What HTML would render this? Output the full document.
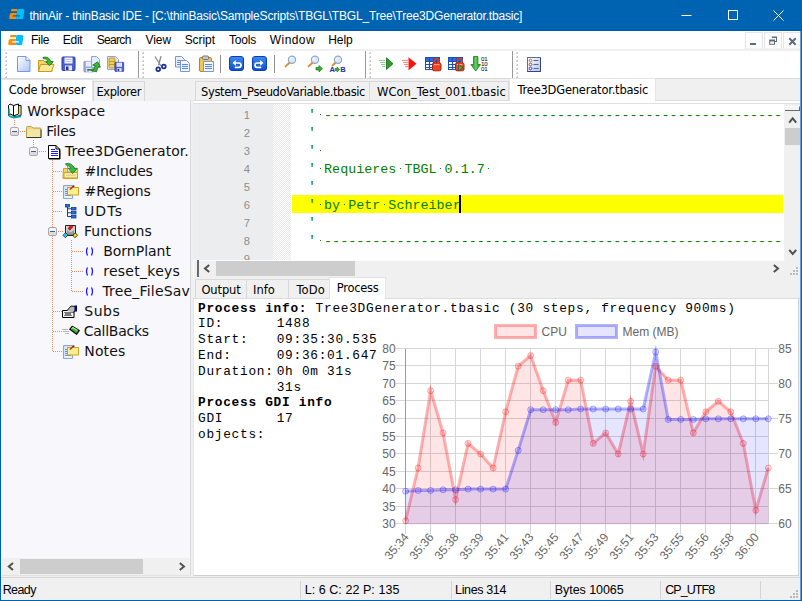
<!DOCTYPE html>
<html><head><meta charset="utf-8"><title>thinAir - thinBasic IDE</title>
<style>
*{box-sizing:border-box;margin:0;padding:0}
html,body{width:802px;height:601px;overflow:hidden;background:#f0f0f0}
body{position:relative;font-family:"Liberation Sans",sans-serif;font-size:12px;color:#000}
.abs{position:absolute}
#win{position:absolute;left:0;top:0;width:802px;height:601px;background:#f0f0f0;overflow:hidden}
#title{left:0;top:0;width:802px;height:31px;background:#0063b1;color:#fff}
#title span{position:absolute;top:9px;font-size:12px;white-space:nowrap;line-height:14px}
#menu{left:1px;top:31px;width:800px;height:19px;background:#fff}
#menu span{position:absolute;top:2px;line-height:15px;font-size:12px;white-space:nowrap}
#tool{left:1px;top:49px;width:800px;height:30px;background:#fff;border-top:2px solid #f0f0f0;border-bottom:1px solid #d9d9d9}
.tab{position:absolute;font-family:"DejaVu Sans","Liberation Sans",sans-serif;font-size:11.5px;white-space:nowrap;background:#f0f0f0;border:1px solid #d9d9d9;border-bottom:none;color:#000}
.tab.on{background:#fff;border-color:#e4e4e4}
.tab span{position:absolute;white-space:nowrap}
#tree{left:2px;top:101px;width:188px;height:457px;background:#f8f7fc;overflow:hidden;font-family:"DejaVu Sans","Liberation Sans",sans-serif;font-size:14px}
#tree .r{position:absolute;white-space:nowrap;line-height:20px;height:20px;color:#111}
#status{left:1px;top:577px;width:800px;height:23px;background:#f0f0f0;border-top:1px solid #d7d7d7}
#status span{position:absolute;top:5px;font-size:12.5px;line-height:14px;white-space:nowrap}
#status i{position:absolute;top:3px;width:1px;height:18px;background:#d4d4d4}
#code{font-family:"Liberation Mono","DejaVu Sans Mono",monospace;font-size:13.4px;color:#008000}
#code .l{position:absolute;left:0;height:18px;line-height:18px;white-space:pre}
#code .q{position:relative;top:-1px}
.wd{position:absolute;width:1px;height:1px;background:#0a7a0a}
#ln{font-family:"Liberation Sans",sans-serif;font-size:11.2px;color:#8e8e8e}
#proc{font-family:"Liberation Mono","DejaVu Sans Mono",monospace;font-size:12.8px;letter-spacing:0.72px;color:#000}
#proc span{position:absolute;white-space:pre;line-height:16px}
#proc b{font-weight:bold}
</style></head><body>
<div id="win">
<div id="title" class="abs"><span style="left:29.4px;letter-spacing:-0.186px;">thinAir - thinBasic IDE - [C:\thinBasic\SampleScripts\TBGL\TBGL_Tree\Tree3DGenerator.tbasic]</span>
<svg class="abs" style="left:9.4px;top:9.3px" width="17" height="11" viewBox="0 0 17 11"><g transform="translate(1.4,0) skewX(-7.5)"><path d="M1.3 0H7V2.2H.9Q.9 0 1.300 0zM1.500 3.900H7V6.200H3.300V7.600H7V9.900H1.200Q0 9.900 0 8.700V5.400Q0 3.900 1.500 3.900z" fill="#ff8c00"/><path d="M7 0h5.600q1.500 0 1.500 1.500V9.900H7V7.600h3.400V6.200H7z" fill="#00bfff"/></g></svg>
<svg class="abs" style="left:660px;top:0" width="142" height="31" viewBox="0 0 142 31"><g stroke="#fff" stroke-width="1" fill="none"><path d="M21.5 15.5h10"/><rect x="68.500" y="10.500" width="9" height="9"/><path d="M113.500 10.500l10 10M123.500 10.500l-10 10"/></g></svg>
<div class="abs" style="left:0;top:30px;width:802px;height:1px;background:#0058a8"></div>
</div>
<div id="menu" class="abs">
<svg class="abs" style="left:7.2px;top:3.6px" width="17" height="11" viewBox="0 0 17 11"><g transform="translate(1.4,0) skewX(-7.5)"><path d="M1.3 0H7V2.2H.9Q.9 0 1.300 0zM1.500 3.900H7V6.200H3.300V7.600H7V9.900H1.200Q0 9.900 0 8.700V5.400Q0 3.900 1.500 3.900z" fill="#ff8c00"/><path d="M7 0h5.600q1.500 0 1.500 1.500V9.900H7V7.600h3.400V6.200H7z" fill="#00bfff"/></g></svg>
<span style="left:30.1px;letter-spacing:-0.348px;">File</span>
<span style="left:61.7px;letter-spacing:-0.229px;">Edit</span>
<span style="left:95.7px;letter-spacing:-0.666px;">Search</span>
<span style="left:144.4px;letter-spacing:0.001px;">View</span>
<span style="left:183.7px;letter-spacing:-0.078px;">Script</span>
<span style="left:228.1px;letter-spacing:-0.229px;">Tools</span>
<span style="left:268.8px;letter-spacing:0.423px;">Window</span>
<span style="left:327.3px;letter-spacing:-0.096px;">Help</span>
<svg class="abs" style="left:743px;top:1px" width="57" height="18" viewBox="743 32 57 18"><g fill="#fdfdfd" stroke="#e6e6e6"><rect x="744.500" y="32.500" width="17" height="16.500"/><rect x="763.500" y="32.500" width="17" height="16.500"/><rect x="782.500" y="32.500" width="17" height="16.500"/></g><g fill="#5d6b7c"><rect x="749" y="43" width="6" height="2"/><path d="M770.300 36.500h5.700v5.500h-2v-1h1v-3h-3.700v0z"/><path d="M768.200 39.500h5.800v5.200h-5.800zM769.200 41.500v2.200h3.800v-2.200z" fill-rule="evenodd"/></g><path d="M788.300 38.300l6.400 6.400M794.700 38.300l-6.400 6.400" stroke="#5d6b7c" stroke-width="2" fill="none"/></svg>
</div>
<div id="tool" class="abs"></div>
<svg class="abs" style="left:0;top:0" width="802" height="80" viewBox="0 0 802 80">
<rect x="5" y="52" width="2" height="2" fill="#c9c9c9"/><rect x="5" y="52" width="1" height="1" fill="#f4f4f4"/><rect x="5" y="56" width="2" height="2" fill="#c9c9c9"/><rect x="5" y="56" width="1" height="1" fill="#f4f4f4"/><rect x="5" y="60" width="2" height="2" fill="#c9c9c9"/><rect x="5" y="60" width="1" height="1" fill="#f4f4f4"/><rect x="5" y="64" width="2" height="2" fill="#c9c9c9"/><rect x="5" y="64" width="1" height="1" fill="#f4f4f4"/><rect x="5" y="68" width="2" height="2" fill="#c9c9c9"/><rect x="5" y="68" width="1" height="1" fill="#f4f4f4"/><rect x="5" y="72" width="2" height="2" fill="#c9c9c9"/><rect x="5" y="72" width="1" height="1" fill="#f4f4f4"/><rect x="5" y="76" width="2" height="2" fill="#c9c9c9"/><rect x="5" y="76" width="1" height="1" fill="#f4f4f4"/>
<rect x="138" y="51" width="1" height="27" fill="#9a9a9a"/><rect x="139" y="51" width="1" height="27" fill="#fff"/>
<rect x="142" y="52" width="2" height="2" fill="#c9c9c9"/><rect x="142" y="52" width="1" height="1" fill="#f4f4f4"/><rect x="142" y="56" width="2" height="2" fill="#c9c9c9"/><rect x="142" y="56" width="1" height="1" fill="#f4f4f4"/><rect x="142" y="60" width="2" height="2" fill="#c9c9c9"/><rect x="142" y="60" width="1" height="1" fill="#f4f4f4"/><rect x="142" y="64" width="2" height="2" fill="#c9c9c9"/><rect x="142" y="64" width="1" height="1" fill="#f4f4f4"/><rect x="142" y="68" width="2" height="2" fill="#c9c9c9"/><rect x="142" y="68" width="1" height="1" fill="#f4f4f4"/><rect x="142" y="72" width="2" height="2" fill="#c9c9c9"/><rect x="142" y="72" width="1" height="1" fill="#f4f4f4"/><rect x="142" y="76" width="2" height="2" fill="#c9c9c9"/><rect x="142" y="76" width="1" height="1" fill="#f4f4f4"/>
<rect x="365" y="51" width="1" height="27" fill="#9a9a9a"/><rect x="366" y="51" width="1" height="27" fill="#fff"/>
<rect x="369" y="52" width="2" height="2" fill="#c9c9c9"/><rect x="369" y="52" width="1" height="1" fill="#f4f4f4"/><rect x="369" y="56" width="2" height="2" fill="#c9c9c9"/><rect x="369" y="56" width="1" height="1" fill="#f4f4f4"/><rect x="369" y="60" width="2" height="2" fill="#c9c9c9"/><rect x="369" y="60" width="1" height="1" fill="#f4f4f4"/><rect x="369" y="64" width="2" height="2" fill="#c9c9c9"/><rect x="369" y="64" width="1" height="1" fill="#f4f4f4"/><rect x="369" y="68" width="2" height="2" fill="#c9c9c9"/><rect x="369" y="68" width="1" height="1" fill="#f4f4f4"/><rect x="369" y="72" width="2" height="2" fill="#c9c9c9"/><rect x="369" y="72" width="1" height="1" fill="#f4f4f4"/><rect x="369" y="76" width="2" height="2" fill="#c9c9c9"/><rect x="369" y="76" width="1" height="1" fill="#f4f4f4"/>
<rect x="512" y="51" width="1" height="27" fill="#9a9a9a"/><rect x="513" y="51" width="1" height="27" fill="#fff"/>
<rect x="516" y="52" width="2" height="2" fill="#c9c9c9"/><rect x="516" y="52" width="1" height="1" fill="#f4f4f4"/><rect x="516" y="56" width="2" height="2" fill="#c9c9c9"/><rect x="516" y="56" width="1" height="1" fill="#f4f4f4"/><rect x="516" y="60" width="2" height="2" fill="#c9c9c9"/><rect x="516" y="60" width="1" height="1" fill="#f4f4f4"/><rect x="516" y="64" width="2" height="2" fill="#c9c9c9"/><rect x="516" y="64" width="1" height="1" fill="#f4f4f4"/><rect x="516" y="68" width="2" height="2" fill="#c9c9c9"/><rect x="516" y="68" width="1" height="1" fill="#f4f4f4"/><rect x="516" y="72" width="2" height="2" fill="#c9c9c9"/><rect x="516" y="72" width="1" height="1" fill="#f4f4f4"/><rect x="516" y="76" width="2" height="2" fill="#c9c9c9"/><rect x="516" y="76" width="1" height="1" fill="#f4f4f4"/>
<defs><linearGradient id="gp" x1="0" y1="0" x2="1" y2="1"><stop offset="0" stop-color="#ffffff"/><stop offset="1" stop-color="#a9c6f5"/></linearGradient><linearGradient id="gb" x1="0" y1="0" x2="0" y2="1"><stop offset="0" stop-color="#3f8cf0"/><stop offset="1" stop-color="#0a4fd0"/></linearGradient><linearGradient id="gg" x1="0" y1="0" x2="1" y2="0"><stop offset="0" stop-color="#1f8a1f"/><stop offset=".5" stop-color="#5fd35f"/><stop offset="1" stop-color="#1f8a1f"/></linearGradient></defs>
<path d="M17.500 56.500h8.500l4 4v11h-12.500z" fill="url(#gp)" stroke="#7d97dc"/><path d="M26 56.500v4h4" fill="#e8f0ff" stroke="#7d97dc"/>
<path d="M38.500 60.500h5l1.500 1.500h7v9.500h-13.500z" fill="#f1d56a" stroke="#c79a1e"/><path d="M40.500 64.500h13.500l-2.500 7h-13z" fill="#fbe89a" stroke="#c79a1e"/><path d="M43 57.300q6-1.300 7.700 4.200h2.500l-3.700 4.300-3.800-4.300h2.300q-1-3-5-3z" fill="#3cb83c" stroke="#1b7a1b" stroke-width=".8"/>
<g transform="translate(61.5,56.5) scale(1)" opacity="1"><path d="M.5 1.500q0-1 1-1h11q1 0 1 1v11.500q0 1-1 1h-11q-1 0-1-1z" fill="#4a5ed0" stroke="#2c3aa0"/><rect x="3" y="1" width="8" height="6" fill="#f4f6ff"/><path d="M4 3h6M4 5h6" stroke="#b9c0e6" stroke-width="1"/><rect x="3.500" y="9" width="7" height="5" fill="#e8e8f4"/><rect x="4.500" y="10" width="2.500" height="3.500" fill="#27318f"/></g>
<g transform="translate(83.5,61) scale(0.78)" opacity="0.55"><path d="M.5 1.500q0-1 1-1h11q1 0 1 1v11.500q0 1-1 1h-11q-1 0-1-1z" fill="#4a5ed0" stroke="#2c3aa0"/><rect x="3" y="1" width="8" height="6" fill="#f4f6ff"/><path d="M4 3h6M4 5h6" stroke="#b9c0e6" stroke-width="1"/><rect x="3.500" y="9" width="7" height="5" fill="#e8e8f4"/><rect x="4.500" y="10" width="2.500" height="3.500" fill="#27318f"/></g>
<path d="M91.500 56.500h5l3 3v8h-8z" fill="#e3edfb" stroke="#8ea3dc"/>
<path d="M89 71l6-1.500v-4h-2.500l4-4.500 4 4.500h-2.500v5.500z" fill="#3cb83c" stroke="#1b7a1b" stroke-width=".8" transform="rotate(15 94 66)"/>
<path d="M107.500 56.500h8l3 3v10h-11z" fill="#dfe9fa" stroke="#8ea3dc"/><rect x="109" y="58" width="6" height="10" rx="1" fill="#f3cf55" stroke="#c79a1e"/><path d="M109 61.500h6M109 64.500h6" stroke="#c79a1e"/>
<g transform="translate(114.5,62) scale(0.68)" opacity="1"><path d="M.5 1.500q0-1 1-1h11q1 0 1 1v11.500q0 1-1 1h-11q-1 0-1-1z" fill="#4a5ed0" stroke="#2c3aa0"/><rect x="3" y="1" width="8" height="6" fill="#f4f6ff"/><path d="M4 3h6M4 5h6" stroke="#b9c0e6" stroke-width="1"/><rect x="3.500" y="9" width="7" height="5" fill="#e8e8f4"/><rect x="4.500" y="10" width="2.500" height="3.500" fill="#27318f"/></g>
<path d="M155 56.500l6 9.500M161 56.300l-2.500 9" stroke="#8c8c9c" stroke-width="1.400"/><circle cx="158.200" cy="69.200" r="1.900" fill="none" stroke="#1a2a9c" stroke-width="1.700"/><circle cx="163.800" cy="66.500" r="1.900" fill="none" stroke="#1a2a9c" stroke-width="1.700"/>
<path d="M175.500 56.500h6l3 3v7.500h-9z" fill="#e7effc" stroke="#7d95cf"/><path d="M177 60.500h5M177 62.500h5M177 64.500h5" stroke="#5f8be0"/><path d="M180.500 60.500h6l3 3v8h-9z" fill="#f2f6fe" stroke="#7d95cf"/><path d="M182 64.500h6M182 66.500h6M182 68.500h6" stroke="#4f86e8"/>
<rect x="199.500" y="57.500" width="12" height="14" rx="1.500" fill="#f0c65a" stroke="#b8861a"/><rect x="202.500" y="56" width="6" height="3.500" rx="1" fill="#c8c8c8" stroke="#777"/><path d="M203.500 61.500h7l3 0v10h-10z" fill="#f2f6fe" stroke="#7d95cf"/><path d="M205 64.500h7M205 66.500h7M205 68.500h7" stroke="#4f86e8"/>
<rect x="220" y="55" width="1" height="18" fill="#8f8f8f"/>
<rect x="229.5" y="56.500" width="14" height="14" rx="2.500" fill="url(#gb)" stroke="#0a3fb0"/>
<g transform="translate(229.3,56.500)"><path d="M4 6.500h5.500a2.200 2.200 0 0 1 0 4.400h-4" fill="none" stroke="#fff" stroke-width="1.700"/><path d="M6.500 3.500l-3.200 3 3.200 3z" fill="#fff"/></g>
<rect x="252.5" y="56.500" width="14" height="14" rx="2.500" fill="url(#gb)" stroke="#0a3fb0"/>
<g transform="translate(266.7,56.500) scale(-1,1)"><path d="M4 6.500h5.500a2.200 2.200 0 0 1 0 4.400h-4" fill="none" stroke="#fff" stroke-width="1.700"/><path d="M6.500 3.500l-3.200 3 3.200 3z" fill="#fff"/></g>
<rect x="274" y="55" width="1" height="18" fill="#8f8f8f"/>
<path d="M289.4 62.8l-3.8 3.6" stroke="#e08a2a" stroke-width="1.900" stroke-linecap="round"/><circle cx="292.0" cy="59.8" r="3.600" fill="#dcebfa" stroke="#8fa7c8" stroke-width="1.200"/><path d="M289.9 59.8a2 2 0 0 1 2-2" stroke="#fff" stroke-width="1.100" fill="none"/>
<path d="M312.4 62.8l-3.8 3.6" stroke="#e08a2a" stroke-width="1.900" stroke-linecap="round"/><circle cx="315.0" cy="59.8" r="3.600" fill="#dcebfa" stroke="#8fa7c8" stroke-width="1.200"/><path d="M312.9 59.8a2 2 0 0 1 2-2" stroke="#fff" stroke-width="1.100" fill="none"/>
<path d="M335.4 62.8l-2.8 2.7" stroke="#e08a2a" stroke-width="1.900" stroke-linecap="round"/><circle cx="338.0" cy="59.8" r="3.600" fill="#dcebfa" stroke="#8fa7c8" stroke-width="1.200"/><path d="M335.9 59.8a2 2 0 0 1 2-2" stroke="#fff" stroke-width="1.100" fill="none"/>
<path d="M316 67.500h3v-2l3.500 3.200-3.500 3.200v-2h-3z" fill="#2fb52f" stroke="#147a14" stroke-width=".7"/>
<text x="329.500" y="72.300" font-family="'Liberation Sans',sans-serif" font-weight="bold" font-size="7.500" fill="#1a2fb0">A</text><text x="340.300" y="72.300" font-family="'Liberation Sans',sans-serif" font-weight="bold" font-size="7.500" fill="#1a2fb0">B</text><path d="M335 68.500h2v-1.500l2.800 2.500-2.800 2.500v-1.500h-2z" fill="#2fb52f" stroke="#147a14" stroke-width=".6"/>
<path d="M386.500 57.800l6.500 5.900-6.500 5.900z" fill="#2c9b2c" stroke="#156a15" stroke-width=".8"/><path d="M379 60.500h6M380 62.500h5M381 64.500h4M382 66.500h3" stroke="#8fcf8f" stroke-width="1"/>
<path d="M408.500 57.300l8 6.500-8 6.500z" fill="#ff1010"/><path d="M402 60.500h6M403 62.500h5M404 64.500h4M405 66.500h3" stroke="#ff8a8a" stroke-width="1"/>
<g transform="translate(425,57)"><rect x=".5" y=".5" width="14" height="12" fill="#fff" stroke="#1c4fb8"/><rect x="1" y="1" width="13" height="3" fill="#2f6be0"/><path d="M1 4.500h13M1 7.500h13M1 10.500h13M4.500 1v11M8.500 1v11M11.500 1v11" stroke="#1c4fb8" stroke-width="1.200"/></g>
<g transform="translate(432,57.8)"><path d="M2.400 6v-2.800a2.300 2.300 0 0 1 4.600 0v1" fill="none" stroke="#c8402c" stroke-width="1.700"/><rect x=".5" y="5" width="8.500" height="8" rx="1.600" fill="#ea4422" stroke="#a32410"/><path d="M2 6.800h5.500" stroke="#ff9a78" stroke-width="1.200"/></g>
<g transform="translate(448,57)"><rect x=".5" y=".5" width="14" height="12" fill="#fff" stroke="#1c4fb8"/><rect x="1" y="1" width="13" height="3" fill="#2f6be0"/><path d="M1 4.500h13M1 7.500h13M1 10.500h13M4.500 1v11M8.500 1v11M11.500 1v11" stroke="#1c4fb8" stroke-width="1.200"/></g>
<g transform="translate(455,57.8)"><path d="M2.400 6v-2.800a2.300 2.300 0 0 1 4.600 0v1" fill="none" stroke="#c8402c" stroke-width="1.700"/><rect x=".5" y="5" width="8.500" height="8" rx="1.600" fill="#ea4422" stroke="#a32410"/><path d="M2 6.800h5.500" stroke="#ff9a78" stroke-width="1.200"/></g>
<path d="M458.500 64.500l4.500 3.200-4.500 3.200z" fill="#3cb83c" stroke="#333" stroke-width=".6"/>
<path d="M473.500 56.500h4.400v8h2.600l-4.800 6.500-4.800-6.500h2.600z" fill="url(#gg)" stroke="#1b7a1b" stroke-width=".8"/>
<g font-family="'Liberation Sans',sans-serif" font-size="6.200" fill="#000" letter-spacing="-0.3"><text x="481" y="61.300">01</text><text x="481" y="66.300">10</text><text x="481" y="71.300">01</text></g>
<rect x="527.500" y="57.500" width="13" height="14" fill="url(#gp)" stroke="#5b6f9e"/><path d="M540.500 58v13.500h-13" fill="none" stroke="#39456e"/><circle cx="530.500" cy="60.500" r="1.300" fill="#fff" stroke="#c05a10" stroke-width=".9"/><circle cx="530.500" cy="64.500" r="1.300" fill="#fff" stroke="#c02030" stroke-width=".9"/><circle cx="530.500" cy="68.500" r="1.300" fill="#fff" stroke="#2030a0" stroke-width=".9"/><path d="M533.500 60.500h5M533.500 64.500h5M533.500 68.500h5" stroke="#667" stroke-width="1"/>
</svg>
<div class="tab on" style="left:2px;top:79px;width:91px;height:23px;border-left:none"><span style="left:6.8px;letter-spacing:-0.228px;top:3px">Code browser</span></div>
<div class="tab" style="left:93px;top:81px;width:52px;height:20px"><span style="left:2.4px;letter-spacing:-0.413px;top:3px">Explorer</span></div>
<div id="tree" class="abs">
<svg class="abs" style="left:0;top:0" width="188" height="457" viewBox="0 0 188 457">
<path d="M12.5 19V25" stroke="#ef8c5e" stroke-width="1" stroke-dasharray="1 1" shape-rendering="crispEdges"/>
<path d="M18 30.5H24" stroke="#ef8c5e" stroke-width="1" stroke-dasharray="1 1" shape-rendering="crispEdges"/>
<path d="M31.5 39V46" stroke="#ef8c5e" stroke-width="1" stroke-dasharray="1 1" shape-rendering="crispEdges"/>
<path d="M37 50.5H45" stroke="#ef8c5e" stroke-width="1" stroke-dasharray="1 1" shape-rendering="crispEdges"/>
<path d="M50.5 59V251" stroke="#ef8c5e" stroke-width="1" stroke-dasharray="1 1" shape-rendering="crispEdges"/>
<path d="M51 70.5H61" stroke="#ef8c5e" stroke-width="1" stroke-dasharray="1 1" shape-rendering="crispEdges"/>
<path d="M51 90.5H61" stroke="#ef8c5e" stroke-width="1" stroke-dasharray="1 1" shape-rendering="crispEdges"/>
<path d="M51 110.5H61" stroke="#ef8c5e" stroke-width="1" stroke-dasharray="1 1" shape-rendering="crispEdges"/>
<path d="M51 210.5H61" stroke="#ef8c5e" stroke-width="1" stroke-dasharray="1 1" shape-rendering="crispEdges"/>
<path d="M51 230.5H61" stroke="#ef8c5e" stroke-width="1" stroke-dasharray="1 1" shape-rendering="crispEdges"/>
<path d="M51 250.5H61" stroke="#ef8c5e" stroke-width="1" stroke-dasharray="1 1" shape-rendering="crispEdges"/>
<path d="M56 130.5H61" stroke="#ef8c5e" stroke-width="1" stroke-dasharray="1 1" shape-rendering="crispEdges"/>
<path d="M69.5 139V191" stroke="#ef8c5e" stroke-width="1" stroke-dasharray="1 1" shape-rendering="crispEdges"/>
<path d="M70 150.5H81" stroke="#ef8c5e" stroke-width="1" stroke-dasharray="1 1" shape-rendering="crispEdges"/>
<path d="M70 170.5H81" stroke="#ef8c5e" stroke-width="1" stroke-dasharray="1 1" shape-rendering="crispEdges"/>
<path d="M70 190.5H81" stroke="#ef8c5e" stroke-width="1" stroke-dasharray="1 1" shape-rendering="crispEdges"/>
<g transform="translate(8,26)"><rect x=".5" y=".5" width="8" height="8" rx="1.5" fill="#f4f4f4" stroke="#a9a9a9"/><rect x="1" y="5" width="7" height="3" fill="#dcdcdc"/><path d="M2 4.500h5" stroke="#3d5a9e" stroke-width="1" shape-rendering="crispEdges"/></g>
<g transform="translate(27,46)"><rect x=".5" y=".5" width="8" height="8" rx="1.5" fill="#f4f4f4" stroke="#a9a9a9"/><rect x="1" y="5" width="7" height="3" fill="#dcdcdc"/><path d="M2 4.500h5" stroke="#3d5a9e" stroke-width="1" shape-rendering="crispEdges"/></g>
<g transform="translate(46,126)"><rect x=".5" y=".5" width="8" height="8" rx="1.5" fill="#f4f4f4" stroke="#a9a9a9"/><rect x="1" y="5" width="7" height="3" fill="#dcdcdc"/><path d="M2 4.500h5" stroke="#3d5a9e" stroke-width="1" shape-rendering="crispEdges"/></g>
<g transform="translate(5,2)"><path d="M1.500 2.500l1.500-1.500 3.500 1.500v10l-3.500-1.500-1.500 1.500z" fill="#fff" stroke="#000"/><path d="M6.500 2.500l5-1.500v10l-5 2z" fill="#fffef0" stroke="#000"/><path d="M11.500 2.500h2.500v10l-7.500 1.500" fill="none" stroke="#000"/><path d="M12.500 3v9" stroke="#e8d24a" stroke-width="1.500"/><path d="M2 13l4.500 1.500 7.500-1.200" fill="none" stroke="#00a0a0" stroke-width="1.800"/><path d="M2 5.500v7" stroke="#00a0a0" stroke-width="1.500"/></g>
<g transform="translate(24,23)"><path d="M.5 3.500q0-1 1-1h4l1.500 1.500h7q1 0 1 1v8.500h-14.500z" fill="#e9da8a" stroke="#b5a24e"/><path d="M1 5.500h13.500v7.500h-13.500z" fill="#f3e7a3"/><path d="M.5 13.500h14.500v-8" fill="none" stroke="#3a3a2a" stroke-width="1"/></g>
<g transform="translate(46,44)"><path d="M.5 .5h7.500l3.500 3.500v9.500h-11z" fill="#fff" stroke="#000"/><path d="M8 .5v3.500h3.500" fill="none" stroke="#000"/><path d="M2.500 4.500h4M2.500 6.500h7M2.500 8.500h7M2.500 10.500h7" stroke="#1a1aff" stroke-width="1" shape-rendering="crispEdges"/><path d="M12 4.500v9.500h-11" fill="none" stroke="#000" stroke-width="1"/></g>
<g transform="translate(61,62)"><path d="M.5 5.500h3.500l1-1h5l1 1h3.500v10h-14.500z" fill="#f2d46e" stroke="#cfa020"/><path d="M4.500 9v-6h5.500l2 2v4z" fill="#e4eefc" stroke="#8aa4d0"/><path d="M1 9.500h13.500v5.500h-13.500z" fill="#fbeaa0" stroke="#cfa020"/><path d="M3 11.500h9.500v1.500h-9.500z" fill="#e0d29a"/><path d="M2.800 .6q6.400-1.200 8.200 4.700h3.200l-4.600 5.200-4.400-5.200h2.700q-.8-3.200-5.100-3.400z" fill="#3cbc3c" stroke="#1b7a1b" stroke-width=".8"/></g>
<g transform="translate(61,83)"><path d="M.5 1.500h9v13h-9z" fill="#d5e3f7" stroke="#8aa4d0"/><path d="M2 5.500h3M2 7.500h3M2 9.500h3M2 11.500h6" stroke="#6f92cf" stroke-width="1"/><path d="M1.500 12h7v2h-7z" fill="#eef3fb"/><path d="M4.500 3.500h11v7.500h-11z" fill="#fbee8c" stroke="#c9a227"/><path d="M7 5.500l3-3" stroke="#c0392b" stroke-width="1.600"/><circle cx="10.500" cy="2.300" r="1" fill="#7a1f1f"/></g>
<g transform="translate(63,103)"><g fill="#2a6fd6" stroke="#0d3f96" stroke-width=".8"><rect x=".5" y=".5" width="4" height="2.500"/><rect x="6.500" y="3.500" width="4.500" height="2.500"/><rect x="6.500" y="7.500" width="4.500" height="2.500"/><rect x="6.500" y="11.500" width="4.500" height="2.500"/></g><path d="M2.500 3v9.500h4M2.500 4.800h4M2.500 8.800h4" fill="none" stroke="#0d3f96" stroke-width="1"/></g>
<g transform="translate(61,123)"><path d="M2.500 1.500h10v9.500h-10z" fill="#d0d0d0" stroke="#222"/><path d="M4 6l3.500 2.500 3.500-2.500v4.500h-7z" fill="#9a9a9a"/><path d="M5 4.500l3-3.500 2 1.700-3 3.500z" fill="#e01818" stroke="#8a0d0d" stroke-width=".6"/><path d="M0 11.300l2.600-2.600 2.400 2.400-2.600 2.600z" fill="#19d5e6" stroke="#000" stroke-width=".7"/><path d="M9.600 11.200l2.800-2.300 2.200 2.500-2.800 2.300z" fill="#f4e21a" stroke="#000" stroke-width=".7"/><path d="M4 11.500h6.500" stroke="#222" stroke-width="1"/></g>
<g transform="translate(83,146)"><path d="M2.500 .5q-2 3.500 0 8M6.500 .5q2 3.500 0 8" fill="none" stroke="#1a1aee" stroke-width="1.300"/></g>
<g transform="translate(83,166)"><path d="M2.500 .5q-2 3.500 0 8M6.500 .5q2 3.500 0 8" fill="none" stroke="#1a1aee" stroke-width="1.300"/></g>
<g transform="translate(83,186)"><path d="M2.500 .5q-2 3.500 0 8M6.500 .5q2 3.500 0 8" fill="none" stroke="#1a1aee" stroke-width="1.300"/></g>
<g transform="translate(60,203)"><path d="M.5 6.500h11.500v7h-11.500z" fill="#f4f4f4" stroke="#000"/><path d="M2.500 8.500h7M2.500 11.500h7" stroke="#000" stroke-width="1" stroke-dasharray="1 1"/><path d="M3 10h6" stroke="#000" stroke-width="1"/><path d="M5 6.500l4-4.500 5 .5-1 5-2.500 1" fill="#b9b9b9" stroke="#000" stroke-width=".9"/><path d="M12.500 1.500h2.500v6h-2.500z" fill="#000080"/></g>
<g transform="translate(60,223)"><path d="M.5 5.500h6M1.500 7.500h5M3.500 9.500h4" stroke="#777" stroke-width="1" stroke-dasharray="1 1"/><path d="M7.800 5.300l2.400-3 7 4.300-2.600 3.600z" fill="#2fae3f" stroke="#0c0c0c" stroke-width="1.300" stroke-linejoin="round"/><path d="M9.600 5l1.200-1.500 4.800 3" fill="none" stroke="#b6f07a" stroke-width="1.100"/></g>
<g transform="translate(61,243)"><path d="M.5 1.500h9v13h-9z" fill="#d5e3f7" stroke="#8aa4d0"/><path d="M2 5.500h3M2 7.500h3M2 9.500h3M2 11.500h6" stroke="#6f92cf" stroke-width="1"/><path d="M1.500 12h7v2h-7z" fill="#eef3fb"/><path d="M4.500 3.500h11v7.500h-11z" fill="#fbee8c" stroke="#c9a227"/><path d="M7 5.500l3-3" stroke="#c0392b" stroke-width="1.600"/><circle cx="10.500" cy="2.300" r="1" fill="#7a1f1f"/></g>
</svg>
<div class="r" style="left:25.3px;letter-spacing:0.171px;top:0px">Workspace</div>
<div class="r" style="left:44.3px;letter-spacing:-0.309px;top:20px">Files</div>
<div class="r" style="left:63.0px;letter-spacing:0.046px;top:40px">Tree3DGenerator.<span style="margin-left:3px">tbasic</span></div>
<div class="r" style="left:82.6px;letter-spacing:-0.213px;top:60px">#Includes</div>
<div class="r" style="left:82.6px;letter-spacing:-0.108px;top:80px">#Regions</div>
<div class="r" style="left:81.9px;letter-spacing:1.213px;top:100px">UDTs</div>
<div class="r" style="left:81.9px;letter-spacing:0.120px;top:120px">Functions</div>
<div class="r" style="left:101.2px;letter-spacing:-0.004px;top:140px">BornPlant</div>
<div class="r" style="left:101.2px;letter-spacing:0.270px;top:160px">reset_keys</div>
<div class="r" style="left:100.4px;letter-spacing:0.195px;top:180px">Tree_FileSave</div>
<div class="r" style="left:82.3px;letter-spacing:0.516px;top:200px">Subs</div>
<div class="r" style="left:81.7px;letter-spacing:-0.253px;top:220px">CallBacks</div>
<div class="r" style="left:82.3px;letter-spacing:0.116px;top:240px">Notes</div>
</div>
<div class="abs" style="left:2px;top:558px;width:188px;height:17px;background:#f0f0f0"></div>
<div class="abs" style="left:20px;top:559px;width:123px;height:15px;background:#cdcdcd"></div>
<svg class="abs" style="left:2px;top:558px" width="188" height="17"><g fill="none" stroke="#505050" stroke-width="2"><path d="M11 4.900l-4.200 3.500 4.200 3.500"/><path d="M177.800 4.900l4.200 3.500-4.200 3.500"/></g></svg>
<div class="abs" style="left:190px;top:100px;width:1px;height:476px;background:#dadada"></div>
<div class="abs" style="left:2px;top:575px;width:189px;height:1px;background:#e2e2e2"></div>
<div class="tab" style="left:195px;top:81px;width:175px;height:20px"><span style="left:5.1px;letter-spacing:-0.383px;top:3px">System_PseudoVariable.tbasic</span></div>
<div class="tab" style="left:370px;top:81px;width:139px;height:20px;border-left:none"><span style="left:7.0px;letter-spacing:0.050px;top:3px">WCon_Test_001.tbasic</span></div>
<div class="tab on" style="left:509px;top:78px;width:147px;height:24px"><span style="left:7.4px;letter-spacing:-0.214px;top:4px">Tree3DGenerator.tbasic</span></div>
<div class="abs" style="left:193px;top:100px;width:316px;height:1px;background:#dcdcdc"></div>
<div class="abs" style="left:656px;top:100px;width:144px;height:1px;background:#dcdcdc"></div>
<div class="abs" style="left:193px;top:101px;width:607px;height:2px;background:#fff"></div>
<div class="abs" style="left:193px;top:103px;width:607px;height:1px;background:#e0e0e0"></div>
<div class="abs" style="left:193px;top:104px;width:591px;height:156px;background:#fff;overflow:hidden">
<div class="abs" style="left:0;top:0;width:80px;height:156px;background:#ecedef"></div>
<svg class="abs" style="left:80px;top:0" width="18" height="156"><defs><pattern id="ck" width="2" height="2" patternUnits="userSpaceOnUse"><rect width="2" height="2" fill="#fff"/><rect width="1" height="1" fill="#e8e8e8"/><rect x="1" y="1" width="1" height="1" fill="#e8e8e8"/></pattern></defs><rect width="18" height="156" fill="url(#ck)"/></svg>
<div class="abs" style="left:99px;top:91px;width:491px;height:18px;background:#ffff00"></div>
<div id="ln">
<span class="abs" style="left:20px;width:37px;text-align:right;top:2px;line-height:18px;height:18px">1</span>
<span class="abs" style="left:20px;width:37px;text-align:right;top:20px;line-height:18px;height:18px">2</span>
<span class="abs" style="left:20px;width:37px;text-align:right;top:38px;line-height:18px;height:18px">3</span>
<span class="abs" style="left:20px;width:37px;text-align:right;top:56px;line-height:18px;height:18px">4</span>
<span class="abs" style="left:20px;width:37px;text-align:right;top:74px;line-height:18px;height:18px">5</span>
<span class="abs" style="left:20px;width:37px;text-align:right;top:92px;line-height:18px;height:18px">6</span>
<span class="abs" style="left:20px;width:37px;text-align:right;top:110px;line-height:18px;height:18px">7</span>
<span class="abs" style="left:20px;width:37px;text-align:right;top:128px;line-height:18px;height:18px">8</span>
<span class="abs" style="left:20px;width:37px;text-align:right;top:146px;line-height:18px;height:18px">9</span>
</div>
<div id="code" class="abs" style="left:115px;top:3px;width:475px;height:153px;overflow:hidden">
<div class="l" style="top:0px"><span class="q">'</span> ----------------------------------------------------------------------</div>
<div class="l" style="top:18px"><span class="q">'</span></div>
<div class="l" style="top:36px"><span class="q">'</span> </div>
<div class="l" style="top:54px"><span class="q">'</span> Requieres TBGL 0.1.7 </div>
<div class="l" style="top:72px"><span class="q">'</span></div>
<div class="l" style="top:90px"><span class="q">'</span> by Petr Schreiber</div>
<div class="l" style="top:108px"><span class="q">'</span></div>
<div class="l" style="top:126px"><span class="q">'</span> ----------------------------------------------------------------------</div>
</div>
<i class="wd" style="left:127px;top:10px"></i>
<i class="wd" style="left:127px;top:46px"></i>
<i class="wd" style="left:127px;top:64px"></i>
<i class="wd" style="left:207px;top:64px"></i>
<i class="wd" style="left:247px;top:64px"></i>
<i class="wd" style="left:295px;top:64px"></i>
<i class="wd" style="left:127px;top:100px"></i>
<i class="wd" style="left:151px;top:100px"></i>
<i class="wd" style="left:191px;top:100px"></i>
<i class="wd" style="left:127px;top:136px"></i>
<div class="abs" style="left:266px;top:91px;width:2px;height:18px;background:#000"></div>
</div>
<div class="abs" style="left:784px;top:104px;width:16px;height:156px;background:#f0f0f0"></div>
<div class="abs" style="left:785px;top:106px;width:15px;height:5px;background:#f4f4f4;border-bottom:1px solid #696969;border-right:1px solid #696969;border-top:1px solid #fff"></div>
<div class="abs" style="left:785px;top:128px;width:15px;height:17px;background:#cdcdcd"></div>
<svg class="abs" style="left:784px;top:104px" width="16" height="156"><g fill="none" stroke="#505050" stroke-width="2"><path d="M5.200 18.600l3.500-4.200 3.500 4.200"/><path d="M5.200 145.800l3.500 4.200 3.500-4.200"/></g></svg>
<div class="abs" style="left:193px;top:260px;width:607px;height:17px;background:#f0f0f0"></div>
<div class="abs" style="left:193px;top:260px;width:592px;height:1px;background:#fbfbfb"></div>
<div class="abs" style="left:193px;top:260px;width:1px;height:17px;background:#fff"></div>
<div class="abs" style="left:197px;top:260px;width:2px;height:17px;background:#6a6a6a"></div>
<div class="abs" style="left:216px;top:261px;width:139px;height:15px;background:#cdcdcd"></div>
<svg class="abs" style="left:193px;top:260px" width="607" height="17"><g fill="none" stroke="#505050" stroke-width="2"><path d="M16.200 4.900l-4.200 3.500 4.200 3.500"/><path d="M580.800 4.900l4.200 3.500-4.200 3.500"/></g><g fill="#bdbdbd"><rect x="603" y="13" width="2" height="2"/><rect x="600" y="13" width="2" height="2"/><rect x="597" y="13" width="2" height="2"/><rect x="603" y="10" width="2" height="2"/><rect x="600" y="10" width="2" height="2"/><rect x="603" y="7" width="2" height="2"/></g></svg>
<div class="tab" style="left:195px;top:279px;width:52px;height:20px"><span style="left:5.4px;letter-spacing:-0.111px;top:3px">Output</span></div>
<div class="tab" style="left:246px;top:279px;width:43px;height:20px"><span style="left:6.0px;letter-spacing:0.011px;top:3px">Info</span></div>
<div class="tab" style="left:288px;top:279px;width:42px;height:20px"><span style="left:7.4px;letter-spacing:0.133px;top:3px">ToDo</span></div>
<div class="tab on" style="left:329px;top:277px;width:57px;height:23px"><span style="left:6.8px;letter-spacing:-0.271px;top:3px">Process</span></div>
<div class="abs" style="left:386px;top:298px;width:414px;height:1px;background:#dcdcdc"></div>
<div class="abs" style="left:193px;top:298px;width:137px;height:1px;background:#dcdcdc"></div>
<div class="abs" style="left:193px;top:299px;width:606px;height:277px;background:#fff;border-right:1px solid #d0d0d0;border-bottom:1px solid #d0d0d0;border-left:1px solid #e6e6e6"></div>
<div id="proc" class="abs" style="left:198px;top:300px;width:600px;height:275px">
<span style="left:0.0px;top:0.60px"><b>Process info:</b> Tree3DGenerator.tbasic (30 steps, frequency 900ms)</span>
<span style="left:0.0px;top:16.40px">ID:</span>
<span style="left:78.7px;top:16.40px">1488</span>
<span style="left:0.0px;top:32.20px">Start:</span>
<span style="left:78.7px;top:32.20px">09:35:30.535</span>
<span style="left:0.0px;top:48.00px">End:</span>
<span style="left:78.7px;top:48.00px">09:36:01.647</span>
<span style="left:0.0px;top:63.80px">Duration:</span>
<span style="left:78.7px;top:63.80px">0h 0m 31s</span>
<span style="left:78.7px;top:79.60px">31s</span>
<span style="left:0.0px;top:95.40px"><b>Process GDI info</b></span>
<span style="left:0.0px;top:111.20px">GDI</span>
<span style="left:78.7px;top:111.20px">17</span>
<span style="left:0.0px;top:127.00px">objects:</span>
</div>
<svg class="abs" style="left:375px;top:315px" width="424" height="260" viewBox="375 315 424 260" font-family="'Liberation Sans',Arial,sans-serif" font-size="12" fill="#666">
<g stroke="#d6d6d6" stroke-width="1" shape-rendering="crispEdges">
<path d="M395.6 348.5H768.3"/>
<path d="M395.6 365.5H768.3"/>
<path d="M395.6 383.5H768.3"/>
<path d="M395.6 400.5H768.3"/>
<path d="M395.6 418.5H768.3"/>
<path d="M395.6 436.5H768.3"/>
<path d="M395.6 453.5H768.3"/>
<path d="M395.6 471.5H768.3"/>
<path d="M395.6 488.5H768.3"/>
<path d="M395.6 506.5H768.3"/>
<path d="M395.6 523.5H768.3"/>
<path d="M768.3 348.5H778.3"/>
<path d="M768.3 383.5H778.3"/>
<path d="M768.3 418.5H778.3"/>
<path d="M768.3 453.5H778.3"/>
<path d="M768.3 488.5H778.3"/>
<path d="M768.3 523.5H778.3"/>
<path d="M405.5 348.6V534.2"/>
<path d="M430.5 348.6V534.2"/>
<path d="M455.5 348.6V534.2"/>
<path d="M480.5 348.6V534.2"/>
<path d="M505.5 348.6V534.2"/>
<path d="M530.5 348.6V534.2"/>
<path d="M555.5 348.6V534.2"/>
<path d="M580.5 348.6V534.2"/>
<path d="M605.5 348.6V534.2"/>
<path d="M630.5 348.6V534.2"/>
<path d="M655.5 348.6V534.2"/>
<path d="M680.5 348.6V534.2"/>
<path d="M705.5 348.6V534.2"/>
<path d="M730.5 348.6V534.2"/>
<path d="M755.5 348.6V534.2"/>
<path d="M768.5 348.6V524.2"/>
</g>
<path d="M405.5 348.6V524.2" stroke="#9a9a9a" stroke-width="1" shape-rendering="crispEdges"/>
<polygon points="405.6,520.7 418.1,468.0 430.6,390.7 443.1,432.9 455.6,499.6 468.1,443.4 480.6,454.0 493.1,468.0 505.7,411.8 518.2,366.2 530.7,355.6 543.2,390.7 555.7,422.4 568.2,380.2 580.7,380.2 593.2,443.4 605.7,432.9 618.2,454.0 630.7,401.3 643.2,454.0 655.7,366.2 668.2,380.2 680.8,380.2 693.3,432.9 705.8,411.8 718.3,401.3 730.8,411.8 743.3,443.4 755.8,510.2 768.3,468.0 768.3,524.2 405.6,524.2" fill="rgba(255,0,0,0.1)"/>
<polyline points="405.6,520.7 418.1,468.0 430.6,390.7 443.1,432.9 455.6,499.6 468.1,443.4 480.6,454.0 493.1,468.0 505.7,411.8 518.2,366.2 530.7,355.6 543.2,390.7 555.7,422.4 568.2,380.2 580.7,380.2 593.2,443.4 605.7,432.9 618.2,454.0 630.7,401.3 643.2,454.0 655.7,366.2 668.2,380.2 680.8,380.2 693.3,432.9 705.8,411.8 718.3,401.3 730.8,411.8 743.3,443.4 755.8,510.2 768.3,468.0" fill="none" stroke="rgba(255,0,0,0.3)" stroke-width="3" stroke-linejoin="miter" stroke-miterlimit="10"/>
<g fill="rgba(255,0,0,0.1)" stroke="rgba(255,0,0,0.3)" stroke-width="1">
<circle cx="405.6" cy="520.7" r="3"/>
<circle cx="418.1" cy="468.0" r="3"/>
<circle cx="430.6" cy="390.7" r="3"/>
<circle cx="443.1" cy="432.9" r="3"/>
<circle cx="455.6" cy="499.6" r="3"/>
<circle cx="468.1" cy="443.4" r="3"/>
<circle cx="480.6" cy="454.0" r="3"/>
<circle cx="493.1" cy="468.0" r="3"/>
<circle cx="505.7" cy="411.8" r="3"/>
<circle cx="518.2" cy="366.2" r="3"/>
<circle cx="530.7" cy="355.6" r="3"/>
<circle cx="543.2" cy="390.7" r="3"/>
<circle cx="555.7" cy="422.4" r="3"/>
<circle cx="568.2" cy="380.2" r="3"/>
<circle cx="580.7" cy="380.2" r="3"/>
<circle cx="593.2" cy="443.4" r="3"/>
<circle cx="605.7" cy="432.9" r="3"/>
<circle cx="618.2" cy="454.0" r="3"/>
<circle cx="630.7" cy="401.3" r="3"/>
<circle cx="643.2" cy="454.0" r="3"/>
<circle cx="655.7" cy="366.2" r="3"/>
<circle cx="668.2" cy="380.2" r="3"/>
<circle cx="680.8" cy="380.2" r="3"/>
<circle cx="693.3" cy="432.9" r="3"/>
<circle cx="705.8" cy="411.8" r="3"/>
<circle cx="718.3" cy="401.3" r="3"/>
<circle cx="730.8" cy="411.8" r="3"/>
<circle cx="743.3" cy="443.4" r="3"/>
<circle cx="755.8" cy="510.2" r="3"/>
<circle cx="768.3" cy="468.0" r="3"/>
</g>
<polygon points="405.6,491.2 418.1,490.5 430.6,490.5 443.1,489.8 455.6,489.8 468.1,489.1 480.6,489.1 493.1,489.1 505.7,489.1 518.2,450.4 530.7,409.7 543.2,409.7 555.7,409.7 568.2,409.7 580.7,409.0 593.2,409.0 605.7,409.0 618.2,409.0 630.7,409.0 643.2,409.0 655.7,352.1 668.2,419.5 680.8,419.5 693.3,419.5 705.8,418.8 718.3,418.8 730.8,418.8 743.3,418.8 755.8,418.8 768.3,418.8 768.3,524.2 405.6,524.2" fill="rgba(0,0,255,0.1)"/>
<polyline points="405.6,491.2 418.1,490.5 430.6,490.5 443.1,489.8 455.6,489.8 468.1,489.1 480.6,489.1 493.1,489.1 505.7,489.1 518.2,450.4 530.7,409.7 543.2,409.7 555.7,409.7 568.2,409.7 580.7,409.0 593.2,409.0 605.7,409.0 618.2,409.0 630.7,409.0 643.2,409.0 655.7,352.1 668.2,419.5 680.8,419.5 693.3,419.5 705.8,418.8 718.3,418.8 730.8,418.8 743.3,418.8 755.8,418.8 768.3,418.8" fill="none" stroke="rgba(0,0,255,0.3)" stroke-width="3" stroke-linejoin="miter" stroke-miterlimit="10"/>
<g fill="rgba(0,0,255,0.1)" stroke="rgba(0,0,255,0.3)" stroke-width="1">
<circle cx="405.6" cy="491.2" r="3"/>
<circle cx="418.1" cy="490.5" r="3"/>
<circle cx="430.6" cy="490.5" r="3"/>
<circle cx="443.1" cy="489.8" r="3"/>
<circle cx="455.6" cy="489.8" r="3"/>
<circle cx="468.1" cy="489.1" r="3"/>
<circle cx="480.6" cy="489.1" r="3"/>
<circle cx="493.1" cy="489.1" r="3"/>
<circle cx="505.7" cy="489.1" r="3"/>
<circle cx="518.2" cy="450.4" r="3"/>
<circle cx="530.7" cy="409.7" r="3"/>
<circle cx="543.2" cy="409.7" r="3"/>
<circle cx="555.7" cy="409.7" r="3"/>
<circle cx="568.2" cy="409.7" r="3"/>
<circle cx="580.7" cy="409.0" r="3"/>
<circle cx="593.2" cy="409.0" r="3"/>
<circle cx="605.7" cy="409.0" r="3"/>
<circle cx="618.2" cy="409.0" r="3"/>
<circle cx="630.7" cy="409.0" r="3"/>
<circle cx="643.2" cy="409.0" r="3"/>
<circle cx="655.7" cy="352.1" r="3"/>
<circle cx="668.2" cy="419.5" r="3"/>
<circle cx="680.8" cy="419.5" r="3"/>
<circle cx="693.3" cy="419.5" r="3"/>
<circle cx="705.8" cy="418.8" r="3"/>
<circle cx="718.3" cy="418.8" r="3"/>
<circle cx="730.8" cy="418.8" r="3"/>
<circle cx="743.3" cy="418.8" r="3"/>
<circle cx="755.8" cy="418.8" r="3"/>
<circle cx="768.3" cy="418.8" r="3"/>
</g>
<g text-anchor="end">
<text x="395.6" y="352.8">80</text>
<text x="395.6" y="369.8">75</text>
<text x="395.6" y="387.8">70</text>
<text x="395.6" y="404.8">65</text>
<text x="395.6" y="422.8">60</text>
<text x="395.6" y="440.8">55</text>
<text x="395.6" y="457.8">50</text>
<text x="395.6" y="475.8">45</text>
<text x="395.6" y="492.8">40</text>
<text x="395.6" y="510.8">35</text>
<text x="395.6" y="527.8">30</text>
</g><g text-anchor="start">
<text x="778.3" y="352.8">85</text>
<text x="778.3" y="387.8">80</text>
<text x="778.3" y="422.8">75</text>
<text x="778.3" y="457.8">70</text>
<text x="778.3" y="492.8">65</text>
<text x="778.3" y="527.8">60</text>
</g>
<g text-anchor="end">
<text transform="translate(406.0,534.7) rotate(-50)" y="4.3">35:34</text>
<text transform="translate(431.0,534.7) rotate(-50)" y="4.3">35:36</text>
<text transform="translate(456.0,534.7) rotate(-50)" y="4.3">35:38</text>
<text transform="translate(481.0,534.7) rotate(-50)" y="4.3">35:39</text>
<text transform="translate(506.1,534.7) rotate(-50)" y="4.3">35:41</text>
<text transform="translate(531.1,534.7) rotate(-50)" y="4.3">35:43</text>
<text transform="translate(556.1,534.7) rotate(-50)" y="4.3">35:45</text>
<text transform="translate(581.1,534.7) rotate(-50)" y="4.3">35:47</text>
<text transform="translate(606.1,534.7) rotate(-50)" y="4.3">35:49</text>
<text transform="translate(631.1,534.7) rotate(-50)" y="4.3">35:51</text>
<text transform="translate(656.1,534.7) rotate(-50)" y="4.3">35:53</text>
<text transform="translate(681.2,534.7) rotate(-50)" y="4.3">35:55</text>
<text transform="translate(706.2,534.7) rotate(-50)" y="4.3">35:56</text>
<text transform="translate(731.2,534.7) rotate(-50)" y="4.3">35:58</text>
<text transform="translate(756.2,534.7) rotate(-50)" y="4.3">36:00</text>
</g>
<rect x="495.5" y="325.5" width="40" height="12" fill="rgba(255,0,0,0.1)" stroke="rgba(255,0,0,0.3)" stroke-width="3"/>
<text x="541.5" y="336">CPU</text>
<rect x="576.5" y="325.5" width="40" height="12" fill="rgba(0,0,255,0.1)" stroke="rgba(0,0,255,0.3)" stroke-width="3"/>
<text x="622.5" y="336">Mem (MB)</text>
</svg>
<div id="status" class="abs"><span style="left:1.7px;letter-spacing:-0.610px;">Ready</span><span style="left:303.7px;letter-spacing:0.055px;">L: 6 C: 22 P: 135</span><span style="left:454.1px;letter-spacing:-0.365px;">Lines 314</span><span style="left:553.8px;letter-spacing:-0.060px;">Bytes 10065</span><span style="left:664.2px;letter-spacing:-0.930px;">CP_UTF8</span>
<i style="left:299px"></i>
<i style="left:450px"></i>
<i style="left:549px"></i>
<i style="left:659px"></i>
<i style="left:759px"></i>
<svg class="abs" style="left:789px;top:12px" width="9" height="9"><g fill="#b8b8b8"><rect x="6" y="6" width="2" height="2"/><rect x="3" y="6" width="2" height="2"/><rect x="0" y="6" width="2" height="2"/><rect x="6" y="3" width="2" height="2"/><rect x="3" y="3" width="2" height="2"/><rect x="6" y="0" width="2" height="2"/></g></svg>
</div>
<div class="abs" style="left:0;top:31px;width:1px;height:570px;background:#0063b1"></div>
<div class="abs" style="left:800px;top:31px;width:1px;height:570px;background:#6d9fd4"></div>
<div class="abs" style="left:801px;top:31px;width:1px;height:570px;background:#0063b1"></div>
<div class="abs" style="left:0;top:600px;width:802px;height:1px;background:#0063b1"></div>
</div>
</body></html>
